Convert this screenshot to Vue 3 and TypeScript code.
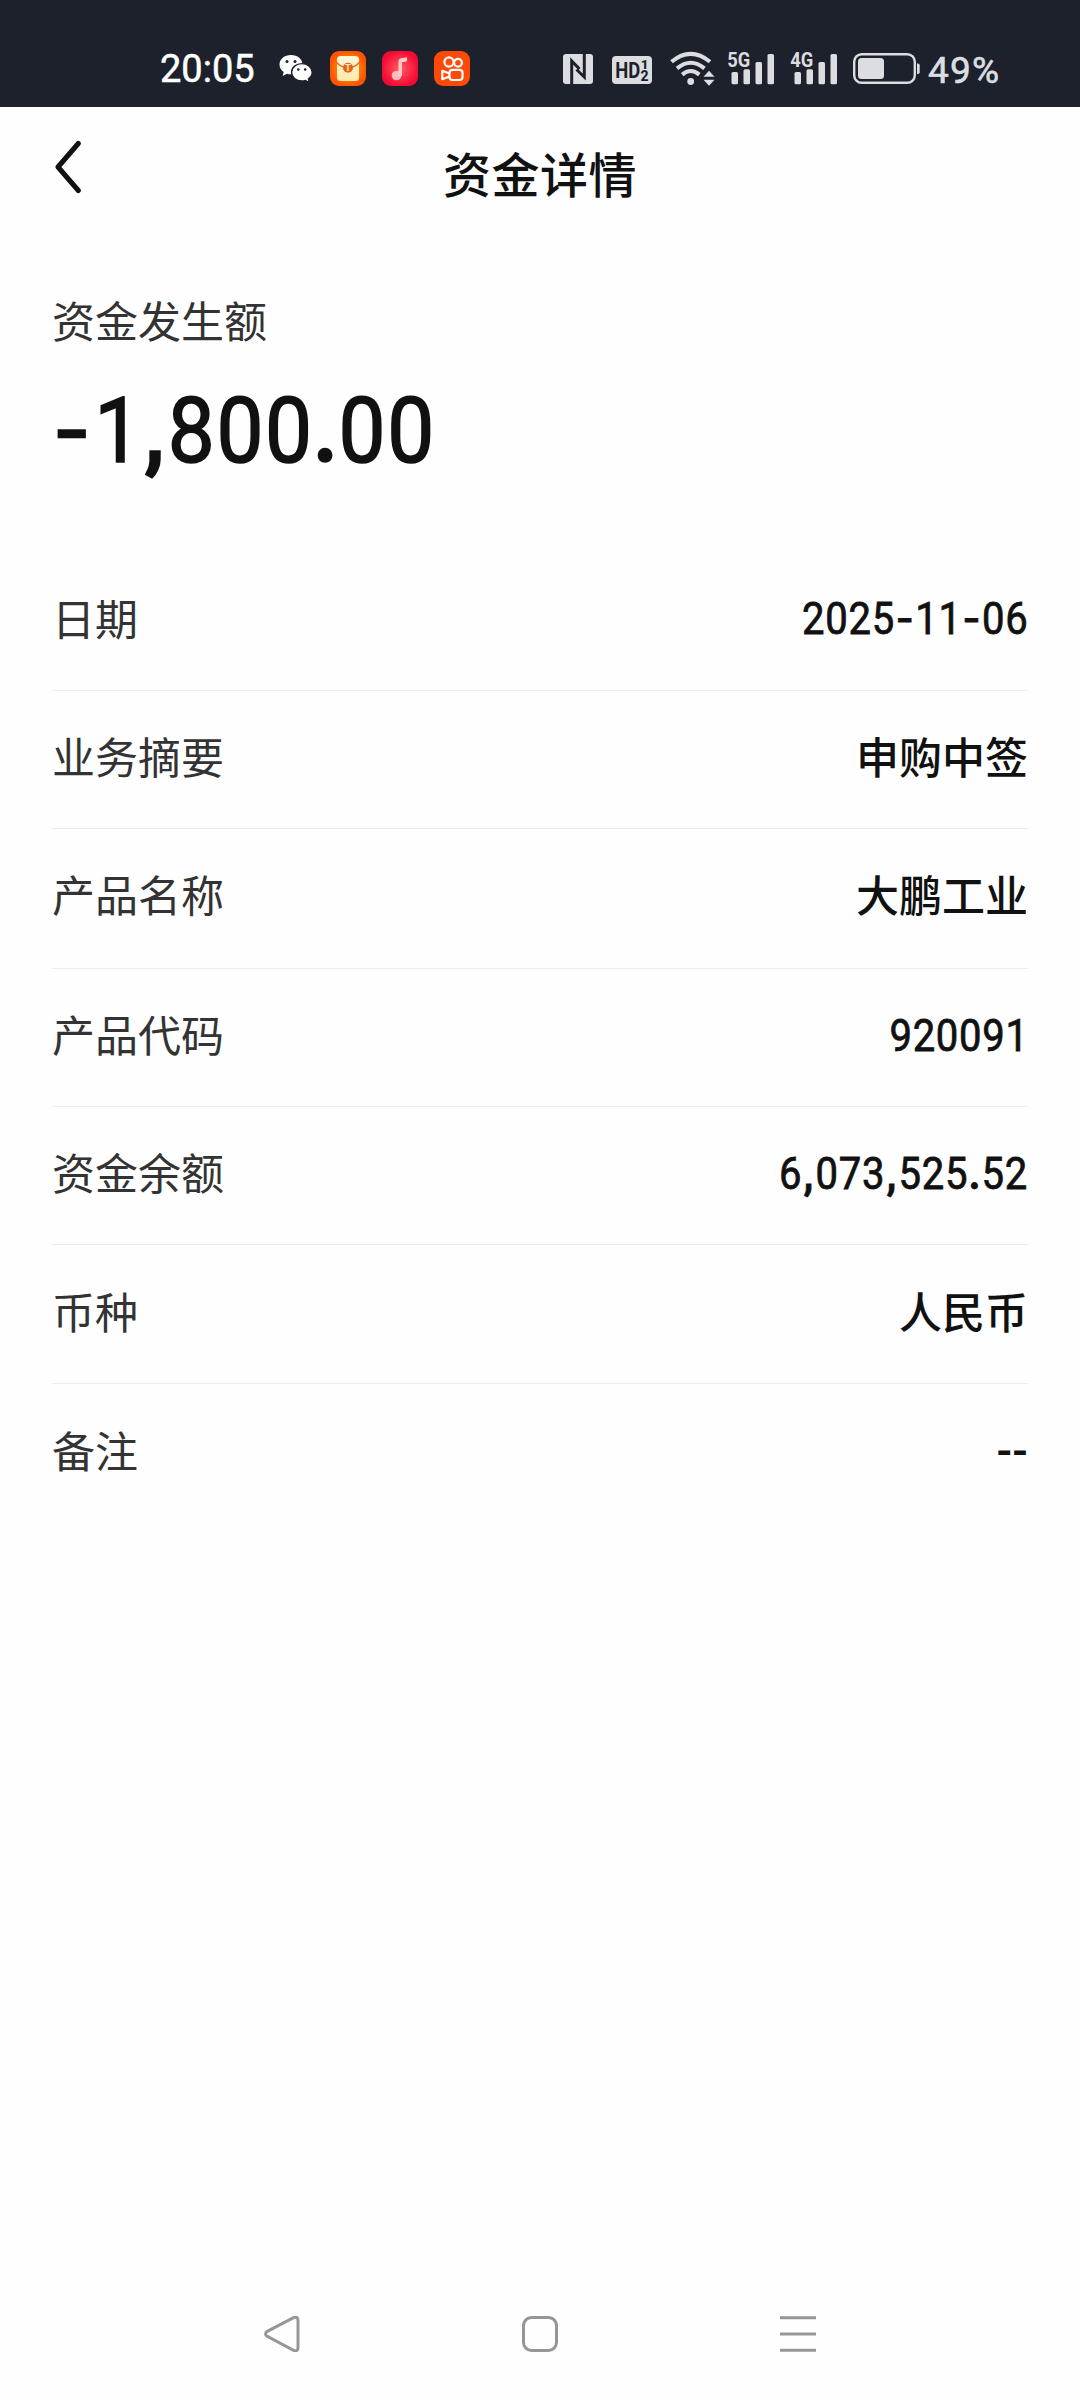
<script setup lang="ts">
interface Row {
  label: string
  value: string
  numeric?: boolean
}

const amount = '-1,800.00'

const rows: Row[] = [
  { label: '日期', value: '2025-11-06', numeric: true },
  { label: '业务摘要', value: '申购中签' },
  { label: '产品名称', value: '大鹏工业' },
  { label: '产品代码', value: '920091', numeric: true },
  { label: '资金余额', value: '6,073,525.52', numeric: true },
  { label: '币种', value: '人民币' },
  { label: '备注', value: '--' },
]

// Digits, separators and dashes each take a fixed advance
const kind = (c: string): string => (c === '-' ? 'dash' : c === ',' || c === '.' ? 'sep' : 'digit')
</script>

<template>
  <div class="screen">
    <header class="status">
      <span class="clock">20:05</span>
      <svg class="wechat" width="34" height="30" viewBox="0 0 34 30">
        <path fill="#fff" d="M12 1C5.400 1 .5 5.200 .5 10.500c0 3 1.600 5.700 4.200 7.400L3.600 22l4.300-2.300c1.300.4 2.700.6 4.100.6C18.500 20.300 23.500 16 23.500 10.600S18.500 1 12 1z" />
        <path fill="#fff" stroke="#1d212c" stroke-width="1.400" d="M22.800 9.600c-5.700 0-10.200 3.800-10.200 8.700s4.500 8.700 10.200 8.700c1.300 0 2.500-.2 3.600-.6l4 2.200-1-3.700c2.400-1.600 3.800-4 3.800-6.600 0-4.900-4.600-8.700-10.400-8.700z" />
        <g fill="#1d212c"><circle cx="8" cy="7.600" r="1.500" /><circle cx="16" cy="7.600" r="1.500" /><circle cx="19.300" cy="15.500" r="1.300" /><circle cx="26.200" cy="15.500" r="1.300" /></g>
      </svg>
      <svg class="app first" width="36" height="35" viewBox="0 0 36 35">
        <defs>
          <radialGradient id="orange"><stop offset=".5" stop-color="#ff8a00" /><stop offset="1" stop-color="#ff5306" /></radialGradient>
          <linearGradient id="cream" x2="0" y2="1"><stop offset="0" stop-color="#fff6dc" /><stop offset="1" stop-color="#ffe9a6" /></linearGradient>
        </defs>
        <rect width="36" height="35" rx="9" fill="url(#orange)" />
        <rect x="7" y="5" width="22" height="25" rx="3.500" fill="url(#cream)" />
        <path d="M7 11.500Q10 16 18 17Q26 16 29 11.500" fill="none" stroke="#ef7024" stroke-width="1.500" />
        <circle cx="18" cy="16.800" r="5" fill="#e8641e" />
        <text x="18" y="20.200" text-anchor="middle" font-size="9.500" font-weight="700" fill="#ffe9b8">T</text>
      </svg>
      <svg class="app" width="36" height="35" viewBox="0 0 36 35">
        <defs><radialGradient id="red"><stop offset="0" stop-color="#ff5f5f" /><stop offset="1" stop-color="#f50a35" /></radialGradient></defs>
        <rect width="36" height="35" rx="9" fill="url(#red)" />
        <circle cx="14.500" cy="24.500" r="4.800" fill="#ffbcbc" />
        <path d="M16.500 25V10.500Q16.500 7.700 19.300 7.300L25 6.300V10.300L20 11.300V25z" fill="#ffc9c9" />
      </svg>
      <svg class="app" width="36" height="35" viewBox="0 0 36 35">
        <rect width="36" height="35" rx="9" fill="#ff4906" />
        <g fill="none" stroke="#fff" stroke-width="2.200" stroke-linejoin="round">
          <circle cx="15" cy="11" r="4.600" /><circle cx="24" cy="11.700" r="3.900" />
          <rect x="15.500" y="18.800" width="13" height="10.200" rx="3" />
          <path d="M15.500 22.500L8.300 19.800V28.200L15.500 25.500" />
        </g>
      </svg>

      <svg class="nfc" width="30" height="30" viewBox="0 0 30 30">
        <rect width="30" height="30" rx="3" fill="#dcdde0" />
        <path d="M8.700 30V7L16.500 15M21.300 0V23L13.500 15.500" fill="none" stroke="#1d212c" stroke-width="3" />
      </svg>
      <svg class="hd" width="40" height="28" viewBox="0 0 40 28">
        <rect width="40" height="28" rx="4" fill="#dcdde0" />
        <g fill="#1d212c" font-weight="700">
          <text x="3.200" y="22" font-size="22" textLength="25" lengthAdjust="spacingAndGlyphs">HD</text>
          <text x="28.800" y="13" font-size="13.500" font-weight="800">1</text>
          <text x="28.400" y="25" font-size="14" font-weight="800">2</text>
        </g>
      </svg>
      <svg class="wifi" width="46" height="35" viewBox="0 0 46 35">
        <g fill="none" stroke="#dcdde0" stroke-width="4">
          <path d="M1.500 10.800Q20.700-5 40 10.800" />
          <path d="M7 17.400Q20.700 6 34.500 17.400" />
          <path d="M12.200 23.600Q20.700 16.500 29.300 23.600" />
        </g>
        <circle cx="20.700" cy="30.500" r="3.400" fill="#dcdde0" />
        <path d="M33.500 25.700L39 19.800L44.500 25.700zM33.500 28.800L39 34.700L44.500 28.800z" fill="#dcdde0" />
      </svg>
      <svg v-for="g in ['5G', '4G']" :key="g" class="signal" width="52" height="43" viewBox="-3 -10 52 43">
        <g fill="#dcdde0">
          <text x="-.7" y="15" font-size="20.500" font-weight="700" textLength="23" lengthAdjust="spacingAndGlyphs">{{ g }}</text>
          <rect x="3.500" y="20" width="6.500" height="12.300" rx="1.500" />
          <rect x="15.500" y="17.200" width="6.500" height="15.100" rx="1.500" />
          <rect x="27.500" y="10" width="6.500" height="22.300" rx="1.500" />
          <rect x="39.500" y="2" width="6.500" height="30.300" rx="1.500" />
        </g>
      </svg>
      <svg class="battery" width="67" height="31" viewBox="0 0 67 31">
        <rect x="1.200" y="1.200" width="60.600" height="28.600" rx="7.500" fill="none" stroke="#dcdde0" stroke-width="2.400" />
        <rect x="5" y="5" width="26" height="21" rx="3.500" fill="#dcdde0" />
        <path d="M64 10.500h1q1.700 0 1.700 1.700v7q0 1.700-1.700 1.700h-1z" fill="#dcdde0" />
      </svg>
      <span class="percent">49%</span>
    </header>

    <nav class="titlebar">
      <svg class="back" width="28" height="54" viewBox="0 0 28 54">
        <path d="M25.300 3.500L5 27L25.300 50.500" fill="none" stroke="#111" stroke-width="5" stroke-linecap="round" stroke-linejoin="round" />
      </svg>
      <h1>资金详情</h1>
    </nav>

    <section class="summary">
      <div class="caption">资金发生额</div>
      <div class="amount num"><span v-for="(c, i) in amount" :key="i" :class="kind(c)">{{ c }}</span></div>
    </section>

    <main class="list">
      <div v-for="row in rows" :key="row.label" class="row">
        <span class="label">{{ row.label }}</span>
        <span v-if="row.numeric" class="value num"><span v-for="(c, i) in row.value" :key="i" :class="kind(c)">{{ c }}</span></span>
        <span v-else class="value" :class="{ empty: row.value === '--' }">{{ row.value }}</span>
      </div>
    </main>

    <footer class="navbar">
      <svg width="36" height="36" viewBox="0 0 36 36"><path d="M2.800 15.700L30 1.400Q34 .2 34 4.500V31.500Q34 35.800 30 34.600L2.800 20Q.4 17.900 2.800 15.700z" /></svg>
      <svg width="36" height="36" viewBox="0 0 36 36"><rect x="1.500" y="1.500" width="33" height="33" rx="8" /></svg>
      <svg width="36" height="36" viewBox="0 0 36 36"><path d="M0 1.700H36M0 18H36M0 34.300H36" /></svg>
    </footer>
  </div>
</template>

<style>
body {
  background: #fdfdfd;
}
</style>

<style scoped>
.screen {
  width: 1080px;
  height: 2400px;
  display: flex;
  flex-direction: column;
  background: #fefefe;
  color: #111;
  font-family: "Noto Sans CJK SC", sans-serif;
  overflow: hidden;
}
.status {
  height: 107px;
  flex: none;
  display: flex;
  align-items: flex-start;
  background: #1d212c;
  font-family: Roboto, sans-serif;
}
.status svg {
  flex: none;
  display: block;
}
.clock {
  width: 119px;
  margin-left: 160px;
  padding-top: 47px;
  font-size: 38px;
  line-height: 45px;
  -webkit-text-stroke: 0.5px #fff;
  color: #fff;
}
.wechat { margin-top: 54px; }
.app { margin: 51px 0 0 16px; }
.app.first { margin-left: 17px; }
.nfc { margin: 54px 0 0 93px; }
.hd { margin: 56px 0 0 19px; }
.wifi { margin: 51px 0 0 18px; }
.signal { margin: 42px 0 0 9px; }
.signal + .signal { margin-left: 11px; }
.battery { margin: 53px 0 0 13px; }
.percent {
  margin-left: 8px;
  padding-top: 48px;
  font-size: 37px;
  line-height: 45px;
  letter-spacing: 1.2px;
  -webkit-text-stroke: 0.6px #dcdde0;
  color: #dcdde0;
}
.titlebar {
  height: 133px;
  flex: none;
  display: grid;
  grid-template-columns: 1fr auto 1fr;
  align-items: start;
}
.back { margin: 33px 0 0 53px; }
h1 {
  margin: 30px 0 0;
  font-size: 48px;
  line-height: 70px;
  font-weight: 500;
  letter-spacing: 0.5px;
}
.summary {
  height: 312px;
  flex: none;
  padding-left: 49px;
  box-sizing: border-box;
}
.caption {
  padding: 48px 0 0 3px;
  font-size: 43px;
  line-height: 62px;
  color: #333;
}
.num {
  display: block;
  white-space: nowrap;
  font-family: Roboto, sans-serif;
  font-weight: 400;
  -webkit-text-stroke: 0.018em #111;
  transform: scaleX(0.92);
}
.num span {
  display: inline-block;
  text-align: center;
}
.num .digit { width: 0.58em; }
.num .sep {
  width: 0.335em;
  font-weight: 700;
}
.num .dash {
  width: 0.51em;
  font-family: Inter, sans-serif;
  line-height: 1;
  vertical-align: 0;
}
.amount {
  margin-top: 28px;
  padding-left: 1px;
  font-size: 91px;
  line-height: 106px;
  transform-origin: left;
}
.amount .sep { width: 0.3em; }
.amount .dash { width: 0.52em; }
.list {
  flex: 1;
  padding: 0 52px;
}
.row {
  display: flex;
  justify-content: space-between;
  align-items: center;
  height: 138px;
  padding-bottom: 9px;
  box-sizing: border-box;
  border-bottom: 1px solid #eee;
  font-size: 43px;
  line-height: 62px;
}
.row:nth-child(1),
.row:nth-child(6),
.row:nth-child(7) { height: 139px; }
.row:nth-child(3) {
  height: 140px;
  padding-bottom: 11px;
}
.row:last-child { border-bottom-color: transparent; }
.label { color: #333; }
.value { font-weight: 500; }
.value.empty {
  padding-bottom: 5px;
  font-weight: 700;
}
.value.num {
  padding-top: 7px;
  font-size: 43.5px;
  font-weight: 400;
  transform-origin: right;
}
.navbar {
  height: 84px;
  flex: none;
  display: flex;
  gap: 222px;
  padding-left: 264px;
}
.navbar svg {
  fill: none;
  stroke: #969696;
  stroke-width: 3;
}
</style>
